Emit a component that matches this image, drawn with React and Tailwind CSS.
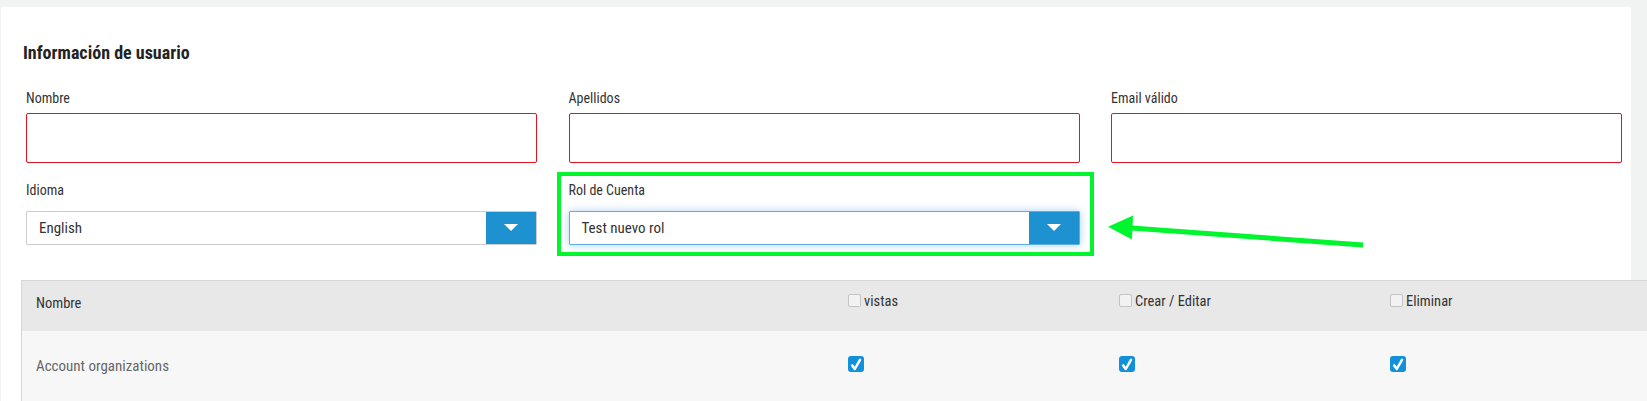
import React from "react";

function Label({ children }) {
  return <div className="text-[14px] leading-[20px] text-[#333]">{children}</div>;
}

function RedInput() {
  return <div className="mt-[5px] h-[50px] rounded-[2px] border border-[#e3141d] bg-white" />;
}

function Caret() {
  return (
    <svg width="14" height="8" viewBox="0 0 14 8">
      <polygon points="0,0 14,0 7,7" fill="#ffffff" />
    </svg>
  );
}

function Select({ value, focused }) {
  return (
    <div
      className={
        "mt-[11px] flex h-[34px] items-stretch overflow-hidden rounded-[1px] bg-white " +
        (focused
          ? "border border-[#5aaee8] shadow-[0_0_8px_rgba(102,175,233,0.55)]"
          : "border border-[#cccccc]")
      }
    >
      <div className="flex flex-1 items-center pl-[12px] text-[15px] text-[#333]">{value}</div>
      <div className="flex w-[50px] items-center justify-center bg-[#1e91d0]">
        <Caret />
      </div>
    </div>
  );
}

function HeadCheck({ label }) {
  return (
    <div className="flex items-start pl-[14px] pt-[11px]">
      <div className="mt-[2px] h-[13px] w-[13px] rounded-[2px] border border-[#c4c4c4] bg-[#f2f2f2]" />
      <span className="ml-[3px] text-[14.5px] leading-[20px] text-[#333]">{label}</span>
    </div>
  );
}

function RowCheck() {
  return (
    <div className="pl-[14px] pt-[25px]">
      <div className="flex h-[16px] w-[16px] items-center justify-center rounded-[3px] bg-[#1190dc]">
        <svg width="12" height="13" viewBox="0 0 12 13">
          <path d="M2.2 7.4 L4.8 11 L10 1.8" fill="none" stroke="#ffffff" strokeWidth="2.5" strokeLinecap="round" strokeLinejoin="round" />
        </svg>
      </div>
    </div>
  );
}

export default function App() {
  return (
    <div className="relative h-[401px] w-[1647px] overflow-hidden bg-[#f1f2f2] pl-px pt-[7px] font-['Roboto_Condensed','Roboto',sans-serif] font-stretch-condensed">
      <div className="relative h-[394px] w-[1630px] bg-white">
        <div className="pl-[25px] pt-[35px]">
          <h2 className="ml-[-3px] text-[18px] font-bold leading-[22px] text-[#222]">Información de usuario</h2>
          <div className="mt-[24px] grid grid-cols-[511px_511px_511px] gap-x-[31.5px]">
            <div>
              <Label>Nombre</Label>
              <RedInput />
            </div>
            <div>
              <Label>Apellidos</Label>
              <RedInput />
            </div>
            <div>
              <Label>Email válido</Label>
              <RedInput />
            </div>
            <div className="mt-[17px]">
              <Label>Idioma</Label>
              <Select value="English" />
            </div>
            <div className="relative mt-[17px]">
              <Label>Rol de Cuenta</Label>
              <Select value="Test nuevo rol" focused />
              <div className="absolute left-[-12px] top-[-8px] h-[84px] w-[537px] border-[4px] border-[#00f52f]" />
            </div>
            <div className="mt-[17px]" />
          </div>
        </div>

        <div className="ml-[20px] mt-[35px] w-[1626px]">
          <div className="grid h-[51px] grid-cols-[812px_271px_271px_271px] border-l border-t border-[#d6d6d6] bg-[#e8e8e8]">
            <div className="pl-[14px] pt-[13px] text-[14.5px] leading-[20px] text-[#333]">Nombre</div>
            <HeadCheck label="vistas" />
            <HeadCheck label="Crear / Editar" />
            <HeadCheck label="Eliminar" />
          </div>
          <div className="grid h-[70px] grid-cols-[812px_271px_271px_271px] border-l border-[#d6d6d6] bg-[#f7f7f7]">
            <div className="pl-[14px] pt-[25px] text-[15px] leading-[20px] text-[#666]">Account organizations</div>
            <RowCheck />
            <RowCheck />
            <RowCheck />
          </div>
        </div>
      </div>

      <svg className="pointer-events-none absolute left-0 top-0" width="1647" height="401" viewBox="0 0 1647 401">
        <line x1="1128" y1="227.7" x2="1363" y2="245" stroke="#00f52f" strokeWidth="5" />
        <polygon points="1108,226.7 1133,215.5 1132,239.5" fill="#00f52f" />
      </svg>
    </div>
  );
}
